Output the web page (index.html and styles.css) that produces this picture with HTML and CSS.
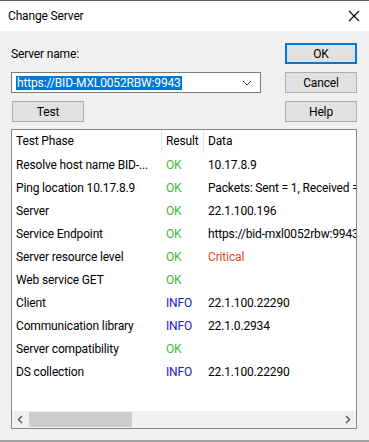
FILE: index.html
```html
<!DOCTYPE html>
<html lang="en">
<head>
    <meta charset="UTF-8">
    <meta name="viewport" content="width=device-width, initial-scale=1.0">
    <title>Change Server</title>
    <link rel="stylesheet" href="styles.css">
</head>
<body>
<div class="window">
    <div class="titlebar">
        <span class="title">Change Server</span>
        <svg class="close" width="12" height="12" viewBox="0 0 12 12">
            <path d="M1 1 L11 11 M11 1 L1 11" stroke="#000" stroke-width="1.1" fill="none"/>
        </svg>
    </div>

    <div class="content">
        <div class="top">
            <label class="label">Server name:</label>
            <button class="btn btn-default">OK</button>

            <div class="combo">
                <span class="combo-text"><span class="selected">https://BID-MXL0052RBW:9943</span></span>
                <svg class="chevron" width="10" height="6" viewBox="0 0 10 6">
                    <path d="M1 1 L5 5 L9 1" stroke="#444" stroke-width="1" fill="none"/>
                </svg>
            </div>
            <button class="btn">Cancel</button>

            <button class="btn btn-test">Test</button>
            <button class="btn">Help</button>
        </div>

        <div class="listview">
            <div class="row header">
                <div class="cell">Test Phase</div>
                <div class="cell">Result</div>
                <div class="cell">Data</div>
            </div>
            <div class="rows">
                <div class="row"><div class="cell">Resolve host name BID-...</div><div class="cell ok">OK</div><div class="cell">10.17.8.9</div></div>
                <div class="row"><div class="cell">Ping location 10.17.8.9</div><div class="cell ok">OK</div><div class="cell">Packets: Sent = 1, Received =</div></div>
                <div class="row"><div class="cell">Server</div><div class="cell ok">OK</div><div class="cell">22.1.100.196</div></div>
                <div class="row"><div class="cell">Service Endpoint</div><div class="cell ok">OK</div><div class="cell">https://bid-mxl0052rbw:9943</div></div>
                <div class="row"><div class="cell">Server resource level</div><div class="cell ok">OK</div><div class="cell critical">Critical</div></div>
                <div class="row"><div class="cell">Web service GET</div><div class="cell ok">OK</div><div class="cell"></div></div>
                <div class="row"><div class="cell">Client</div><div class="cell info">INFO</div><div class="cell">22.1.100.22290</div></div>
                <div class="row"><div class="cell">Communication library</div><div class="cell info">INFO</div><div class="cell">22.1.0.2934</div></div>
                <div class="row"><div class="cell">Server compatibility</div><div class="cell ok">OK</div><div class="cell"></div></div>
                <div class="row"><div class="cell">DS collection</div><div class="cell info">INFO</div><div class="cell">22.1.100.22290</div></div>
            </div>
            <div class="hscroll">
                <svg class="arrow" width="17" height="17" viewBox="0 0 17 17">
                    <path d="M10 5 L6.5 8.5 L10 12" stroke="#606060" stroke-width="1.6" fill="none"/>
                </svg>
                <div class="track"><div class="thumb"></div></div>
                <svg class="arrow" width="17" height="17" viewBox="0 0 17 17">
                    <path d="M7 5 L10.5 8.5 L7 12" stroke="#606060" stroke-width="1.6" fill="none"/>
                </svg>
            </div>
        </div>
    </div>
</div>
</body>
</html>
```

FILE: styles.css
```css
* {
    box-sizing: border-box;
    font-family: "Segoe UI", Roboto, "Liberation Sans", sans-serif;
    letter-spacing: -0.15px;
}
body {
    margin: 0;
    width: 369px;
    height: 442px;
    background-color: #f0f0f0;
    font-size: 12px;
    color: #000;
}
.window {
    display: flex;
    flex-direction: column;
    height: 442px;
    border-top: 1px solid #5a5a5a;
}
.titlebar {
    display: flex;
    align-items: center;
    justify-content: space-between;
    height: 30px;
    background-color: #fff;
    padding: 0 9px 0 8px;
}
.title {
    font-size: 12px;
}
.content {
    flex: 1;
    display: flex;
    flex-direction: column;
    padding: 12px 12px 11px 11px;
    border-bottom: 2px solid #a0a0a0;
}
.top {
    display: grid;
    grid-template-columns: 250px 1fr;
    grid-template-rows: 21px 21px 21px;
    row-gap: 8px;
}
.top .btn {
    justify-self: end;
}
.label {
    align-self: center;
}
.btn {
    width: 72px;
    height: 21px;
    padding: 0;
    background-color: #e1e1e1;
    border: 1px solid #adadad;
    font-size: 12px;
    color: #000;
}
.btn-default {
    border: 2px solid #0078d7;
}
.btn-test {
    justify-self: start !important;
    margin-left: 1px;
}
.combo {
    display: flex;
    align-items: center;
    justify-content: space-between;
    background-color: #fff;
    border: 1px solid #7a7a7a;
    padding: 0 8px 0 4px;
}
.selected {
    background-color: #0078d7;
    color: #fff;
    padding: 0 1px;
    line-height: 14px;
    display: inline-block;
}
.listview {
    flex: 1;
    display: flex;
    flex-direction: column;
    margin-top: 7px;
    background-color: #fff;
    border: 1px solid #828790;
    overflow: hidden;
}
.rows {
    flex: 1;
}
.row {
    display: grid;
    grid-template-columns: 150px 42px 1fr;
    height: 23px;
    align-items: center;
}
.cell {
    padding-left: 4px;
    white-space: nowrap;
    overflow: hidden;
}
.header .cell {
    height: 23px;
    line-height: 23px;
    border-right: 1px solid #e5e5e5;
}
.header .cell:last-child {
    border-right: none;
}
.ok {
    color: #3cb93c;
}
.info {
    color: #2020b8;
}
.critical {
    color: #e4481e;
}
.hscroll {
    display: flex;
    align-items: center;
    height: 17px;
    background-color: #f0f0f0;
}
.arrow {
    flex: none;
}
.track {
    flex: 1;
    height: 15px;
}
.thumb {
    width: 103px;
    height: 15px;
    background-color: #cdcdcd;
}
```
